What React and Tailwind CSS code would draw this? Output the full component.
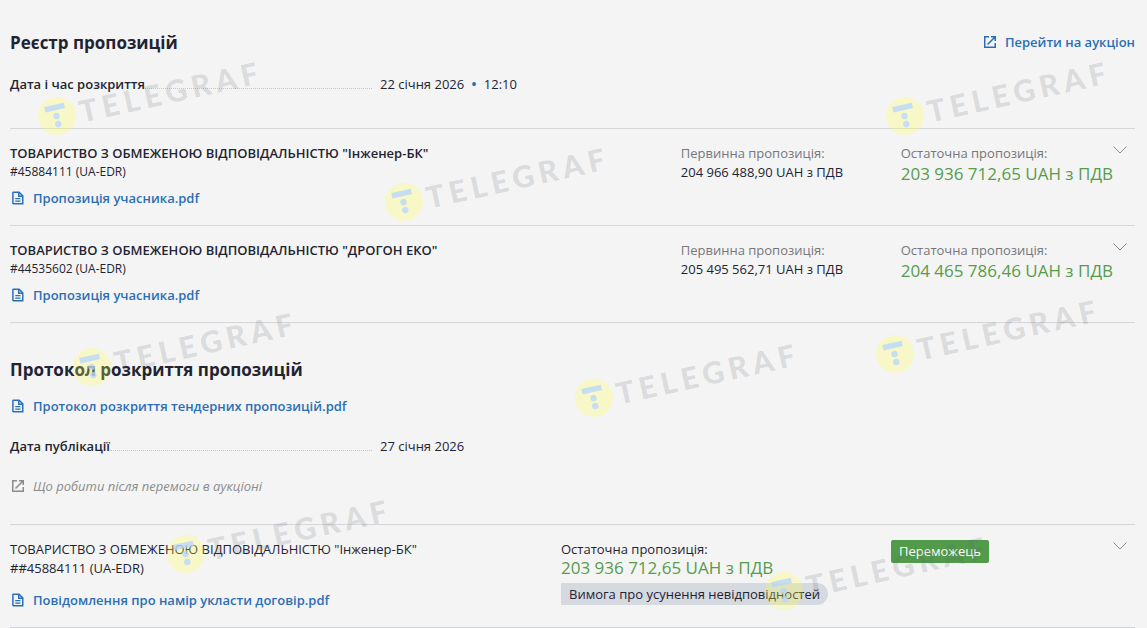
const proposals = [
  {
    name: 'ТОВАРИСТВО З ОБМЕЖЕНОЮ ВІДПОВІДАЛЬНІСТЮ "Інженер-БК"',
    code: '#45884111 (UA-EDR)',
    initial: '204 966 488,90 UAH з ПДВ',
    final: '203 936 712,65 UAH з ПДВ',
  },
  {
    name: 'ТОВАРИСТВО З ОБМЕЖЕНОЮ ВІДПОВІДАЛЬНІСТЮ "ДРОГОН ЕКО"',
    code: '#44535602 (UA-EDR)',
    initial: '205 495 562,71 UAH з ПДВ',
    final: '204 465 786,46 UAH з ПДВ',
  },
];

const watermarks = [
  'left-[37px] top-[46px]',
  'left-[885px] top-[46px]',
  'left-[384px] top-[132px]',
  'left-[72px] top-[297px]',
  'left-[574px] top-[328px]',
  'left-[875px] top-[284px]',
  'left-[166px] top-[484px]',
  'left-[764px] top-[521px]',
];

function Watermark({ className }) {
  return (
    <svg
      width="232"
      height="100"
      viewBox="-20 -70 232 100"
      aria-hidden="true"
      className={`absolute overflow-visible ${className}`}
    >
      <circle r="19" fill="#ffff4d" fillOpacity="0.27" />
      <g transform="rotate(-12.5)">
        <g fill="#b4d6ff" fillOpacity="0.75">
          <rect x="-10.5" y="-11.5" width="20" height="5.5" />
          <circle cx="-0.5" cy="0" r="3.2" />
          <circle cx="-0.5" cy="8.2" r="3.2" />
        </g>
        <text
          x="23"
          y="12"
          fill="#5a5d66"
          fillOpacity="0.18"
          className="font-['Lato',sans-serif] text-[30px] font-black tracking-[5px]"
        >
          TELEGRAF
        </text>
      </g>
    </svg>
  );
}

function OpenIcon() {
  return (
    <svg width="16" height="16" viewBox="0 0 16 16" fill="none" stroke="currentColor" strokeWidth="1.5" aria-hidden="true">
      <path d="M7 2.75H2.75v10.5h10.5V9" />
      <path d="M9 2.75h4.25V7M13 3 5.5 10.5" />
    </svg>
  );
}

function FileIcon() {
  return (
    <svg width="16" height="16" viewBox="0 0 16 16" fill="none" stroke="currentColor" strokeWidth="1.5" aria-hidden="true">
      <path d="M3.5 2.25h5.6l3.65 3.6v7.9H3.5a.6.6 0 0 1-.6-.6V2.85a.6.6 0 0 1 .6-.6Z" />
      <path d="M8.75 2.5v3.75h3.75" />
      <path d="M5.25 8.6h5.2M5.25 11.1h5.2" strokeWidth="1.3" />
    </svg>
  );
}

function FileLink({ children }) {
  return (
    <a href="#file" className="inline-flex items-center gap-[7px] font-semibold text-[#2a6fb5] hover:underline">
      <FileIcon />
      {children}
    </a>
  );
}

function ExpandButton() {
  return (
    <button type="button" aria-label="Розгорнути" className="shrink-0 self-start py-0.5 pr-2">
      <svg width="14" height="8" viewBox="0 0 14 8" fill="none" stroke="#8c8c8c">
        <path d="M0.5 0.5 7 7l6.5-6.5" />
      </svg>
    </button>
  );
}

function DottedField({ label, children }) {
  return (
    <dl className="flex">
      <dt className="mr-2 flex w-[362px] items-baseline font-semibold">
        {label}
        <span className="flex-1 border-b border-dotted border-[#c4c5c9]" />
      </dt>
      <dd>{children}</dd>
    </dl>
  );
}

export default function App() {
  return (
    <main className="relative min-h-screen overflow-hidden bg-[#f4f4f4] pr-3 pl-2.5 font-['Open_Sans',sans-serif] text-[13px] leading-[18px] text-[#1f2433]">
      {/* Proposals register */}
      <header className="flex items-start justify-between pt-8">
        <h2 className="text-[17px] leading-[22px] font-bold">Реєстр пропозицій</h2>
        <a href="#auction" className="mt-px flex items-center gap-[7px] font-semibold text-[#2a6fb5] hover:underline">
          <OpenIcon />
          Перейти на аукціон
        </a>
      </header>

      <div className="mt-[21px] mb-[35px]">
        <DottedField label="Дата і час розкриття">
          22 січня 2026 <span className="mx-1 font-bold text-[#2a6fb5]">•</span> 12:10
        </DottedField>
      </div>

      <ul className="border-b border-[#d5d6d9]">
        {proposals.map((item) => (
          <li
            key={item.code}
            className="grid grid-cols-[671fr_220fr_234fr] border-t border-[#d5d6d9] pt-[15px] pb-[18px]"
          >
            <div>
              <h3 className="font-semibold">{item.name}</h3>
              <p className="text-xs leading-5">{item.code}</p>
              <div className="mt-[7px] flex">
                <FileLink>Пропозиція учасника.pdf</FileLink>
              </div>
            </div>
            <div>
              <p className="text-[#75777d]">Первинна пропозиція:</p>
              <p className="leading-5">{item.initial}</p>
            </div>
            <div className="flex justify-between">
              <div className="whitespace-nowrap">
                <p className="text-[#75777d]">Остаточна пропозиція:</p>
                <p className="text-[17px] leading-6 text-[#579c4c]">{item.final}</p>
              </div>
              <ExpandButton />
            </div>
          </li>
        ))}
      </ul>

      {/* Disclosure protocol */}
      <h2 className="mt-9 text-[17px] leading-[22px] font-bold">Протокол розкриття пропозицій</h2>
      <div className="mt-4 flex">
        <FileLink>Протокол розкриття тендерних пропозицій.pdf</FileLink>
      </div>
      <div className="mt-[22px]">
        <DottedField label="Дата публікації">27 січня 2026</DottedField>
      </div>
      <a href="#help" className="mt-[22px] mb-[29px] flex items-center gap-[7px] text-[#8c8c8c] italic">
        <OpenIcon />
        Що робити після перемоги в аукціоні
      </a>

      {/* Winner */}
      <section className="grid grid-cols-[551fr_330fr_244fr] border-y border-[#d5d6d9] pt-[15px] pb-[18px]">
        <div>
          <h3>{proposals[0].name}</h3>
          <p className="leading-5">##45884111 (UA-EDR)</p>
          <div className="mt-[13px] flex">
            <FileLink>Повідомлення про намір укласти договір.pdf</FileLink>
          </div>
        </div>
        <div>
          <p>Остаточна пропозиція:</p>
          <p className="text-[17px] leading-5 text-[#579c4c]">{proposals[0].final}</p>
          <p className="mt-[5px] inline-block rounded-l-xs rounded-r-full bg-[#d5d9e0] px-2 py-0.5">
            Вимога про усунення невідповідностей
          </p>
        </div>
        <div className="flex items-start justify-between">
          <span className="rounded-xs bg-[#519b4b] px-2 py-0.5 leading-[19px] text-white">Переможець</span>
          <ExpandButton />
        </div>
      </section>

      <div className="pointer-events-none absolute inset-0">
        {watermarks.map((place) => (
          <Watermark key={place} className={place} />
        ))}
      </div>
    </main>
  );
}
